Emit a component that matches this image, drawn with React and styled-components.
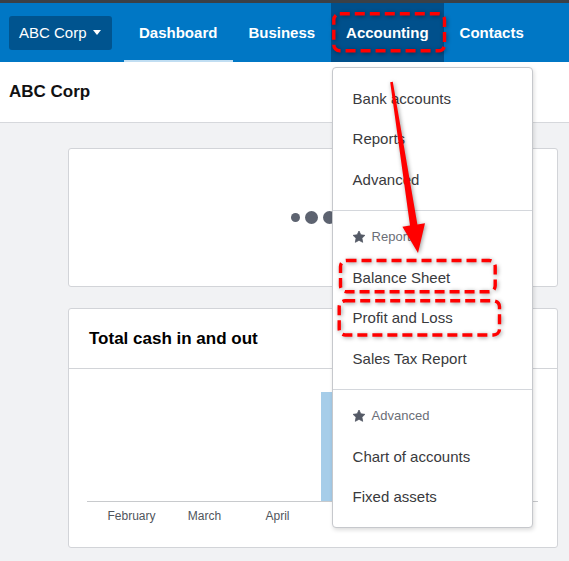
import React from 'react';
import styled, { createGlobalStyle } from 'styled-components';

const GlobalStyle = createGlobalStyle`
  body {
    margin: 0;
    background: #f1f2f4;
    font-family: "Liberation Sans", Arial, sans-serif;
  }
`;

const menu = [
  {
    items: ['Bank accounts', 'Reports', 'Advanced'],
  },
  {
    title: 'Reports',
    items: ['Balance Sheet', 'Profit and Loss', 'Sales Tax Report'],
  },
  {
    title: 'Advanced',
    items: ['Chart of accounts', 'Fixed assets'],
  },
];

const months = [
  { name: 'February', value: 0 },
  { name: 'March', value: 0 },
  { name: 'April', value: 0 },
  { name: 'May', value: 100 },
  { name: 'June', value: 0 },
  { name: 'July', value: 0 },
];

function Star() {
  return (
    <svg width="14" height="14" viewBox="0 0 24 24">
      <path
        d="M12 1.8l3.1 6.5 7 .9-5.1 4.9 1.3 7-6.3-3.4-6.3 3.4 1.3-7L1.9 9.2l7-.9z"
        fill="#545a66"
        stroke="#545a66"
        strokeWidth="1.4"
        strokeLinejoin="round"
      />
    </svg>
  );
}

export default function App() {
  return (
    <Page>
      <GlobalStyle />
      <TopStrip />
      <NavBar>
        <CompanyButton>
          ABC Corp <Caret />
        </CompanyButton>
        <NavList>
          <NavItem $active>Dashboard</NavItem>
          <NavItem>Business</NavItem>
          <NavItem $open>
            Accounting
            <Dropdown>
              {menu.map((section, i) => (
                <Section key={i} $header={!!section.title}>
                  {section.title && (
                    <SectionTitle>
                      <Star />
                      {section.title}
                    </SectionTitle>
                  )}
                  {section.items.map((item) => (
                    <MenuItem key={item}>{item}</MenuItem>
                  ))}
                </Section>
              ))}
            </Dropdown>
          </NavItem>
          <NavItem>Contacts</NavItem>
        </NavList>
      </NavBar>
      <PageHeader>ABC Corp</PageHeader>
      <Content>
        <LoadingCard>
          <Dot $size={9} />
          <Dot $size={13} />
          <Dot $size={13} />
        </LoadingCard>
        <Card>
          <CardHeader>Total cash in and out</CardHeader>
          <Chart>
            <Plot>
              {months.map((m) => (
                <BarSlot key={m.name}>
                  {m.value > 0 && <Bar style={{ height: `${m.value}%` }} />}
                </BarSlot>
              ))}
            </Plot>
            <Labels>
              {months.map((m) => (
                <Label key={m.name}>{m.name}</Label>
              ))}
            </Labels>
          </Chart>
        </Card>
      </Content>
      {/* screenshot annotations drawn over the page */}
      <Annotations width="569" height="561" viewBox="0 0 569 561">
        <g fill="none" stroke="#ff0000" strokeWidth="3.4" strokeDasharray="10 5">
          <rect x="333.8" y="13.8" width="110.7" height="37" rx="6" />
          <rect x="340.5" y="260.5" width="154.7" height="31.3" rx="6" />
          <rect x="339.2" y="300.8" width="160.3" height="34.2" rx="6" />
        </g>
        <polygon
          fill="#ff0000"
          points="390.2,82.2 392.8,81.8 417.4,224.5 425,223.2 418,253 402.4,226.8 410,225.5"
        />
      </Annotations>
    </Page>
  );
}

const Page = styled.div`
  position: relative;
  min-height: 561px;
`;

const TopStrip = styled.div`
  height: 3px;
  background: #3b4046;
`;

const NavBar = styled.nav`
  height: 59px;
  background: #0077c5;
  display: flex;
  align-items: center;
  padding-left: 9px;
`;

const CompanyButton = styled.div`
  height: 34px;
  box-sizing: border-box;
  padding: 0 11px 0 10px;
  background: #00548f;
  border-radius: 3px;
  color: #fff;
  font-size: 15px;
  display: flex;
  align-items: center;
  gap: 6px;
`;

const Caret = styled.span`
  width: 0;
  height: 0;
  border-left: 4px solid transparent;
  border-right: 4px solid transparent;
  border-top: 5px solid #fff;
`;

const NavList = styled.div`
  display: flex;
  align-self: stretch;
  margin-left: 12px;
`;

const NavItem = styled.div`
  position: relative;
  display: flex;
  align-items: center;
  padding: 0 15.5px;
  color: #fff;
  font-size: 15px;
  font-weight: bold;
  background: ${(p) => (p.$open ? '#00508c' : 'transparent')};
  box-shadow: ${(p) => (p.$active ? 'inset 0 -2px 0 #c1def2' : 'none')};
`;

const Dropdown = styled.div`
  position: absolute;
  top: calc(100% + 5px);
  left: 1px;
  width: 201px;
  box-sizing: border-box;
  background: #fff;
  border: 1px solid #c6c8cc;
  border-radius: 4px;
  box-shadow: 1px 2px 4px rgba(0, 0, 0, 0.14);
  z-index: 5;
`;

const Section = styled.div`
  padding: ${(p) => (p.$header ? '6px' : '10px')} 0 10px;
  & + & {
    border-top: 1px solid #d4d7dc;
  }
`;

const MenuItem = styled.div`
  height: 40.5px;
  display: flex;
  align-items: center;
  padding-left: 20px;
  color: #393a3d;
  font-size: 15px;
  font-weight: normal;
`;

const SectionTitle = styled.div`
  height: 40.5px;
  display: flex;
  align-items: center;
  gap: 6px;
  padding-left: 19px;
  color: #6b6e76;
  font-size: 13px;
  font-weight: normal;
`;

const PageHeader = styled.header`
  height: 60px;
  background: #fff;
  border-bottom: 1px solid #d6d8dc;
  display: flex;
  align-items: center;
  padding-left: 9px;
  font-size: 17px;
  font-weight: bold;
  color: #111;
`;

const Content = styled.main`
  display: flex;
  flex-direction: column;
  gap: 21px;
  padding: 25px 0 0 68px;
`;

const Card = styled.section`
  width: 490px;
  box-sizing: border-box;
  background: #fff;
  border: 1px solid #d2d4d8;
  border-radius: 3px;
`;

const LoadingCard = styled(Card)`
  height: 139px;
  display: flex;
  align-items: center;
  justify-content: center;
  gap: 5px;
`;

const Dot = styled.span`
  width: ${(p) => p.$size}px;
  height: ${(p) => p.$size}px;
  border-radius: 50%;
  background: #5d6370;
`;

const CardHeader = styled.h2`
  margin: 0;
  height: 59px;
  border-bottom: 1px solid #d2d4d8;
  display: flex;
  align-items: center;
  padding-left: 20px;
  font-size: 17px;
  font-weight: bold;
  color: #000;
`;

const Chart = styled.div`
  padding: 23px 19px 24px 18px;
`;

const Plot = styled.div`
  height: 109px;
  border-bottom: 1px solid #c8cacd;
  display: grid;
  grid-template-columns: repeat(6, 73px);
  padding-left: 7px;
`;

const BarSlot = styled.div`
  display: flex;
  align-items: flex-end;
  justify-content: center;
`;

const Bar = styled.div`
  width: 58px;
  background: #a6cde9;
`;

const Labels = styled.div`
  display: grid;
  grid-template-columns: repeat(6, 73px);
  padding-left: 8px;
  margin-top: 7px;
`;

const Label = styled.span`
  text-align: center;
  font-size: 12px;
  line-height: 14px;
  color: #50555c;
`;

const Annotations = styled.svg`
  position: absolute;
  top: 0;
  left: 0;
  pointer-events: none;
  z-index: 10;
  filter: drop-shadow(1px 1px 2px rgba(0, 0, 0, 0.4));
`;
